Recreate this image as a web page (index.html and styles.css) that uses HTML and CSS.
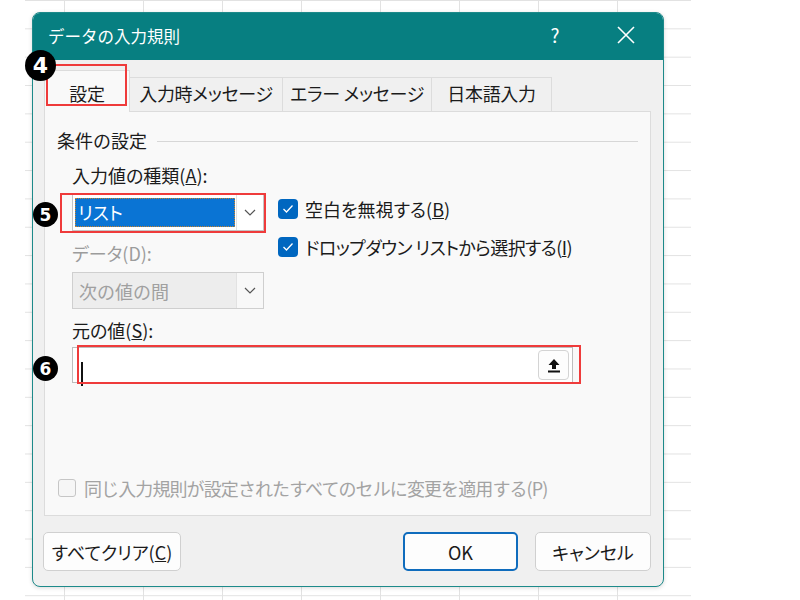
FILE: index.html
```html
<!DOCTYPE html>
<html lang="ja">
<head>
<meta charset="UTF-8">
<title>データの入力規則</title>
<link rel="stylesheet" href="styles.css">
</head>
<body>
<div class="sheet">
  <div class="dialog">
    <div class="titlebar">
      <span class="title">データの入力規則</span>
      <span class="help">?</span>
      <span class="close">
        <svg width="18" height="18" viewBox="0 0 18 18"><path d="M1 1 L17 17 M17 1 L1 17" stroke="#fff" stroke-width="1.6" fill="none"/></svg>
      </span>
    </div>

    <div class="tabs">
      <div class="tab active">設定</div>
      <div class="tab">入力時メッセージ</div>
      <div class="tab">エラー メッセージ</div>
      <div class="tab">日本語入力</div>
    </div>

    <div class="panel">
      <div class="group-title"><span>条件の設定</span><i class="rule"></i></div>

      <div class="criteria">
        <div class="col-left">
          <div class="label">入力値の種類(<u>A</u>):</div>
          <div class="select focused">
            <div class="select-value"><span>リスト</span></div>
            <div class="select-arrow"><svg width="12" height="7" viewBox="0 0 12 7"><path d="M1 1 L6 6 L11 1" stroke="#555" stroke-width="1.2" fill="none"/></svg></div>
          </div>
          <div class="label disabled">データ(D):</div>
          <div class="select disabled">
            <div class="select-value">次の値の間</div>
            <div class="select-arrow"><svg width="12" height="7" viewBox="0 0 12 7"><path d="M1 1 L6 6 L11 1" stroke="#555" stroke-width="1.2" fill="none"/></svg></div>
          </div>
        </div>
        <div class="col-right">
          <label class="check">
            <span class="box checked"><svg width="12" height="10" viewBox="0 0 12 10"><path d="M1.5 5 L4.5 8 L10.5 1.5" stroke="#fff" stroke-width="1.3" fill="none"/></svg></span>
            空白を無視する(<u>B</u>)
          </label>
          <label class="check tight">
            <span class="box checked"><svg width="12" height="10" viewBox="0 0 12 10"><path d="M1.5 5 L4.5 8 L10.5 1.5" stroke="#fff" stroke-width="1.3" fill="none"/></svg></span>
            ドロップダウン リストから選択する(<u>I</u>)
          </label>
        </div>
      </div>

      <div class="label source-label">元の値(<u>S</u>):</div>
      <div class="source">
        <span class="caret"></span>
        <span class="pick">
          <svg width="14" height="15" viewBox="0 0 14 15"><path d="M7 1 L12.5 7 H9 V11 H5 V7 H1.5 Z" fill="#111"/><rect x="1" y="12.5" width="12" height="2" fill="#111"/></svg>
        </span>
      </div>

      <label class="check apply-all">
        <span class="box"></span>
        同じ入力規則が設定されたすべてのセルに変更を適用する(P)
      </label>
    </div>

    <div class="buttons">
      <button class="btn clear-btn">すべてクリア(<u>C</u>)</button>
      <button class="btn ok-btn">OK</button>
      <button class="btn cancel-btn">キャンセル</button>
    </div>
  </div>
</div>

<span class="mark mark-4"></span>
<span class="mark mark-5"></span>
<span class="mark mark-6"></span>
<span class="badge badge-4">4</span>
<span class="badge badge-5">5</span>
<span class="badge badge-6">6</span>
</body>
</html>
```

FILE: styles.css
```css
body {
  margin: 0;
  background: #fff;
  font-family: "Noto Sans CJK JP", "Noto Sans", sans-serif;
  font-size: 18px;
  color: #1b1b1b;
  position: relative;
  height: 600px;
  overflow: hidden;
}

.sheet {
  width: 666px;
  height: 600px;
  margin-left: 25px;
  padding: 12px 0 0 7px;
  box-sizing: border-box;
  background-image:
    linear-gradient(to right, #e2e2e2 1px, transparent 1px),
    linear-gradient(to bottom, #e2e2e2 1px, transparent 1px);
  background-size: 79px 28.35px, 79px 28.35px;
  background-position: 39px 0, 0 0;
}

.dialog {
  width: 632px;
  height: 575px;
  box-sizing: border-box;
  border: 1px solid #1d8a8a;
  border-radius: 8px;
  background: #f0f0f0;
  overflow: hidden;
  display: flex;
  flex-direction: column;
  box-shadow: 0 1px 4px rgba(0, 0, 0, 0.15);
}

.titlebar {
  height: 47px;
  flex: none;
  background: #077f81;
  color: #fff;
  display: flex;
  align-items: center;
  padding: 0 14px 0 15px;
}

.title {
  flex: 1;
  font-size: 16.5px;
  margin-top: -2px;
}

.help {
  width: 40px;
  text-align: center;
  font-size: 19px;
  margin-right: 28px;
  margin-top: -4px;
}

.close {
  width: 46px;
  display: flex;
  justify-content: center;
  margin-top: -3px;
}

.tabs {
  flex: none;
  display: flex;
  align-items: flex-end;
  padding: 10px 0 0 11px;
  height: 41px;
  position: relative;
  z-index: 1;
}

.tab {
  height: 34px;
  box-sizing: border-box;
  border: 1px solid #dcdcdc;
  border-bottom: none;
  border-left: none;
  background: #f0f0f0;
  display: flex;
  align-items: center;
  justify-content: center;
  padding-bottom: 3px;
  font-feature-settings: "palt";
  letter-spacing: -0.3px;
}

.tab:nth-child(2) { width: 153px; }
.tab:nth-child(3) { width: 149px; }
.tab:nth-child(4) { width: 120px; }

.tab.active {
  width: 86px;
  height: 42px;
  margin-bottom: -1px;
  border-left: 1px solid #dcdcdc;
  background: #f9f9f9;
  padding-top: 5px;
}

.panel {
  flex: none;
  height: 405px;
  box-sizing: border-box;
  margin: 0 12px 0 11px;
  border: 1px solid #dcdcdc;
  background: #f9f9f9;
  padding: 17px 12px 16px 12px;
  display: flex;
  flex-direction: column;
}

.group-title {
  display: flex;
  align-items: center;
  line-height: 22px;
}

.group-title .rule {
  flex: 1;
  height: 1px;
  background: #d7d7d7;
  margin-left: 10px;
  margin-top: 2px;
}

.criteria {
  display: flex;
  margin-top: 13px;
  padding-left: 15px;
}

.col-left {
  width: 192px;
}

.col-right {
  padding: 34px 0 0 14px;
  font-feature-settings: "palt";
}

.label {
  line-height: 22px;
  font-feature-settings: "palt";
  white-space: nowrap;
}

.label.disabled {
  color: #9c9c9c;
  margin-top: 11px;
}

.select {
  height: 37px;
  box-sizing: border-box;
  margin-top: 8px;
  border: 1px solid #c4c4c4;
  background: #fff;
  display: flex;
}

.select-value {
  flex: 1;
  padding: 3px 1px 3px 2px;
  display: flex;
  align-items: stretch;
}

.select.focused .select-value span {
  flex: 1;
  background: #0a74d4;
  color: #fff;
  outline: 1px dotted #c8822c;
  outline-offset: -1px;
  padding-left: 3px;
  line-height: 29px;
  font-feature-settings: "palt";
}

.select.disabled {
  background: #ededed;
  border-color: #cfcfcf;
}

.select.disabled .select-value {
  color: #a0a0a0;
  align-items: center;
  padding-left: 6px;
}

.select-arrow {
  width: 26px;
  border-left: 1px solid #e2e2e2;
  background: #fff;
  display: flex;
  align-items: center;
  justify-content: center;
}

.select.disabled .select-arrow {
  background: #f8f8f8;
}

.check {
  display: flex;
  align-items: center;
  line-height: 22px;
  height: 22px;
  margin-bottom: 16px;
  white-space: nowrap;
}

.check.tight {
  letter-spacing: -0.6px;
}

.box {
  width: 20px;
  height: 20px;
  flex: none;
  box-sizing: border-box;
  border-radius: 4px;
  margin-right: 7px;
  display: flex;
  align-items: center;
  justify-content: center;
}

.box.checked {
  background: #0067c0;
}

.source-label {
  margin: 10px 0 0 15px;
}

.source {
  position: relative;
  width: 501px;
  height: 36px;
  box-sizing: border-box;
  margin: 6px 0 0 15px;
  border: 1px solid #bdbdbd;
  background: #fff;
  display: flex;
  align-items: center;
  justify-content: flex-end;
  padding-right: 3px;
}

.caret {
  position: absolute;
  left: 8px;
  top: 14px;
  width: 2px;
  height: 24px;
  background: #111;
}

.pick {
  width: 31px;
  height: 30px;
  box-sizing: border-box;
  border: 1px solid #d4d4d4;
  border-radius: 4px;
  background: #fdfdfd;
  display: flex;
  align-items: center;
  justify-content: center;
}

.apply-all {
  margin: auto 0 0 1px;
  color: #a3a3a3;
  letter-spacing: -0.9px;
}

.apply-all .box {
  width: 18px;
  height: 18px;
  border: 1px solid #c6c6c6;
  border-radius: 3px;
  background: #f6f6f6;
  margin-right: 8px;
}

.buttons {
  display: flex;
  padding: 16px 12px 0 10px;
}

.btn {
  height: 39px;
  font-family: inherit;
  font-size: 18px;
  color: #1b1b1b;
  background: #fdfdfd;
  border: 1px solid #d0d0d0;
  border-radius: 5px;
  font-feature-settings: "palt";
  padding: 0;
}

.clear-btn {
  width: 138px;
}

.ok-btn {
  width: 115px;
  margin-left: auto;
  border: 2px solid #0f6cbd;
}

.cancel-btn {
  width: 116px;
  margin-left: 17px;
}

.mark {
  position: absolute;
  z-index: 5;
  border: 2px solid #ef3b3b;
  box-sizing: border-box;
}

.mark-4 { left: 46px; top: 64px; width: 81px; height: 42px; }
.mark-5 { left: 60px; top: 193px; width: 206px; height: 40px; }
.mark-6 { left: 77px; top: 345px; width: 504px; height: 39px; }

.badge {
  position: absolute;
  z-index: 6;
  border-radius: 50%;
  background: #000;
  color: #fff;
  font-family: "DejaVu Sans", sans-serif;
  font-weight: bold;
  display: flex;
  align-items: center;
  justify-content: center;
}

.badge-4 { left: 25px; top: 50px; width: 31px; height: 31px; font-size: 22px; }
.badge-5 { left: 33px; top: 202px; width: 25px; height: 25px; font-size: 17px; }
.badge-6 { left: 33px; top: 356px; width: 25px; height: 25px; font-size: 17px; }
```
